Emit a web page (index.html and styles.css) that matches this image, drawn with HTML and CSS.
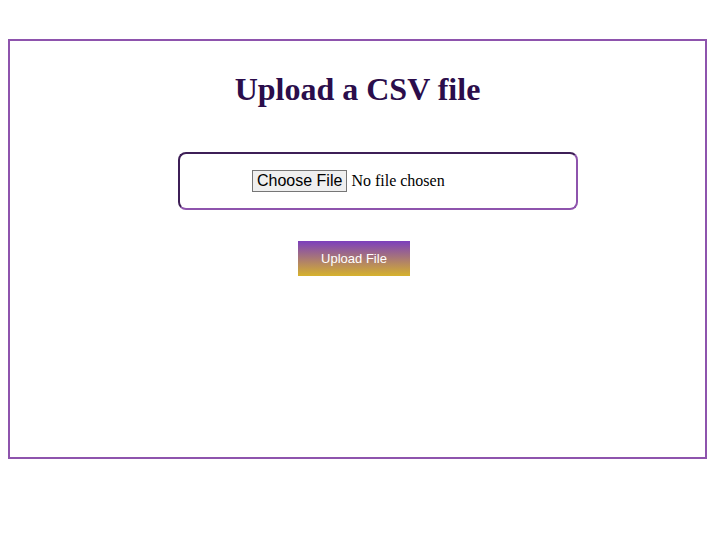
FILE: index.html
```html
<!DOCTYPE html>
<html lang="en">
<head>
<meta charset="utf-8">
<title>Upload a CSV file</title>
<link rel="stylesheet" href="styles.css">
</head>
<body>
<div class="container">
  <h1 class="title">Upload a CSV file</h1>
  <form class="upload-form">
    <div class="file-box">
      <input class="file-input" type="file" accept=".csv">
    </div>
    <button class="upload-btn" type="button">Upload File</button>
  </form>
</div>
</body>
</html>
```
FILE: styles.css
```css
body {
  margin: 8px 5px 8px 8px;
  font-family: "Liberation Serif", "Times New Roman", serif;
  background: #fff;
}

.container {
  margin-top: 31px;
  height: 420px;
  box-sizing: border-box;
  border: 2px solid #8e54ad;
  display: flex;
  flex-direction: column;
}

.title {
  margin: 30px 0 0;
  font-size: 32px;
  font-weight: bold;
  color: #2b0d4b;
  text-align: center;
  line-height: 37px;
}

.upload-form {
  display: flex;
  flex-direction: column;
}

.file-box {
  margin-top: 44px;
  margin-left: 168px;
  width: 400px;
  height: 58px;
  box-sizing: border-box;
  border: 2px solid;
  border-color: #3e1f57 #8e54ad #8e54ad #3e1f57;
  border-radius: 8px;
  display: flex;
  align-items: center;
  justify-content: center;
}

.file-input {
  width: 252px;
  font-family: "Liberation Serif", "Times New Roman", serif;
  font-size: 16px;
}

.file-input::file-selector-button {
  font-family: "Liberation Sans", Arial, sans-serif;
  font-size: 16px;
  padding: 1px 4px;
  margin-right: 4px;
  border: 1px solid #767676;
  border-radius: 0;
  background: #efefef;
  color: #000;
}

.upload-btn {
  margin: 31px 0 0 288px;
  width: 112px;
  height: 35px;
  border: none;
  background: linear-gradient(to bottom, #7c3fbd, #d6b22c);
  color: #fff;
  font-family: "Liberation Sans", Arial, sans-serif;
  font-size: 13px;
  padding: 0;
}
```
